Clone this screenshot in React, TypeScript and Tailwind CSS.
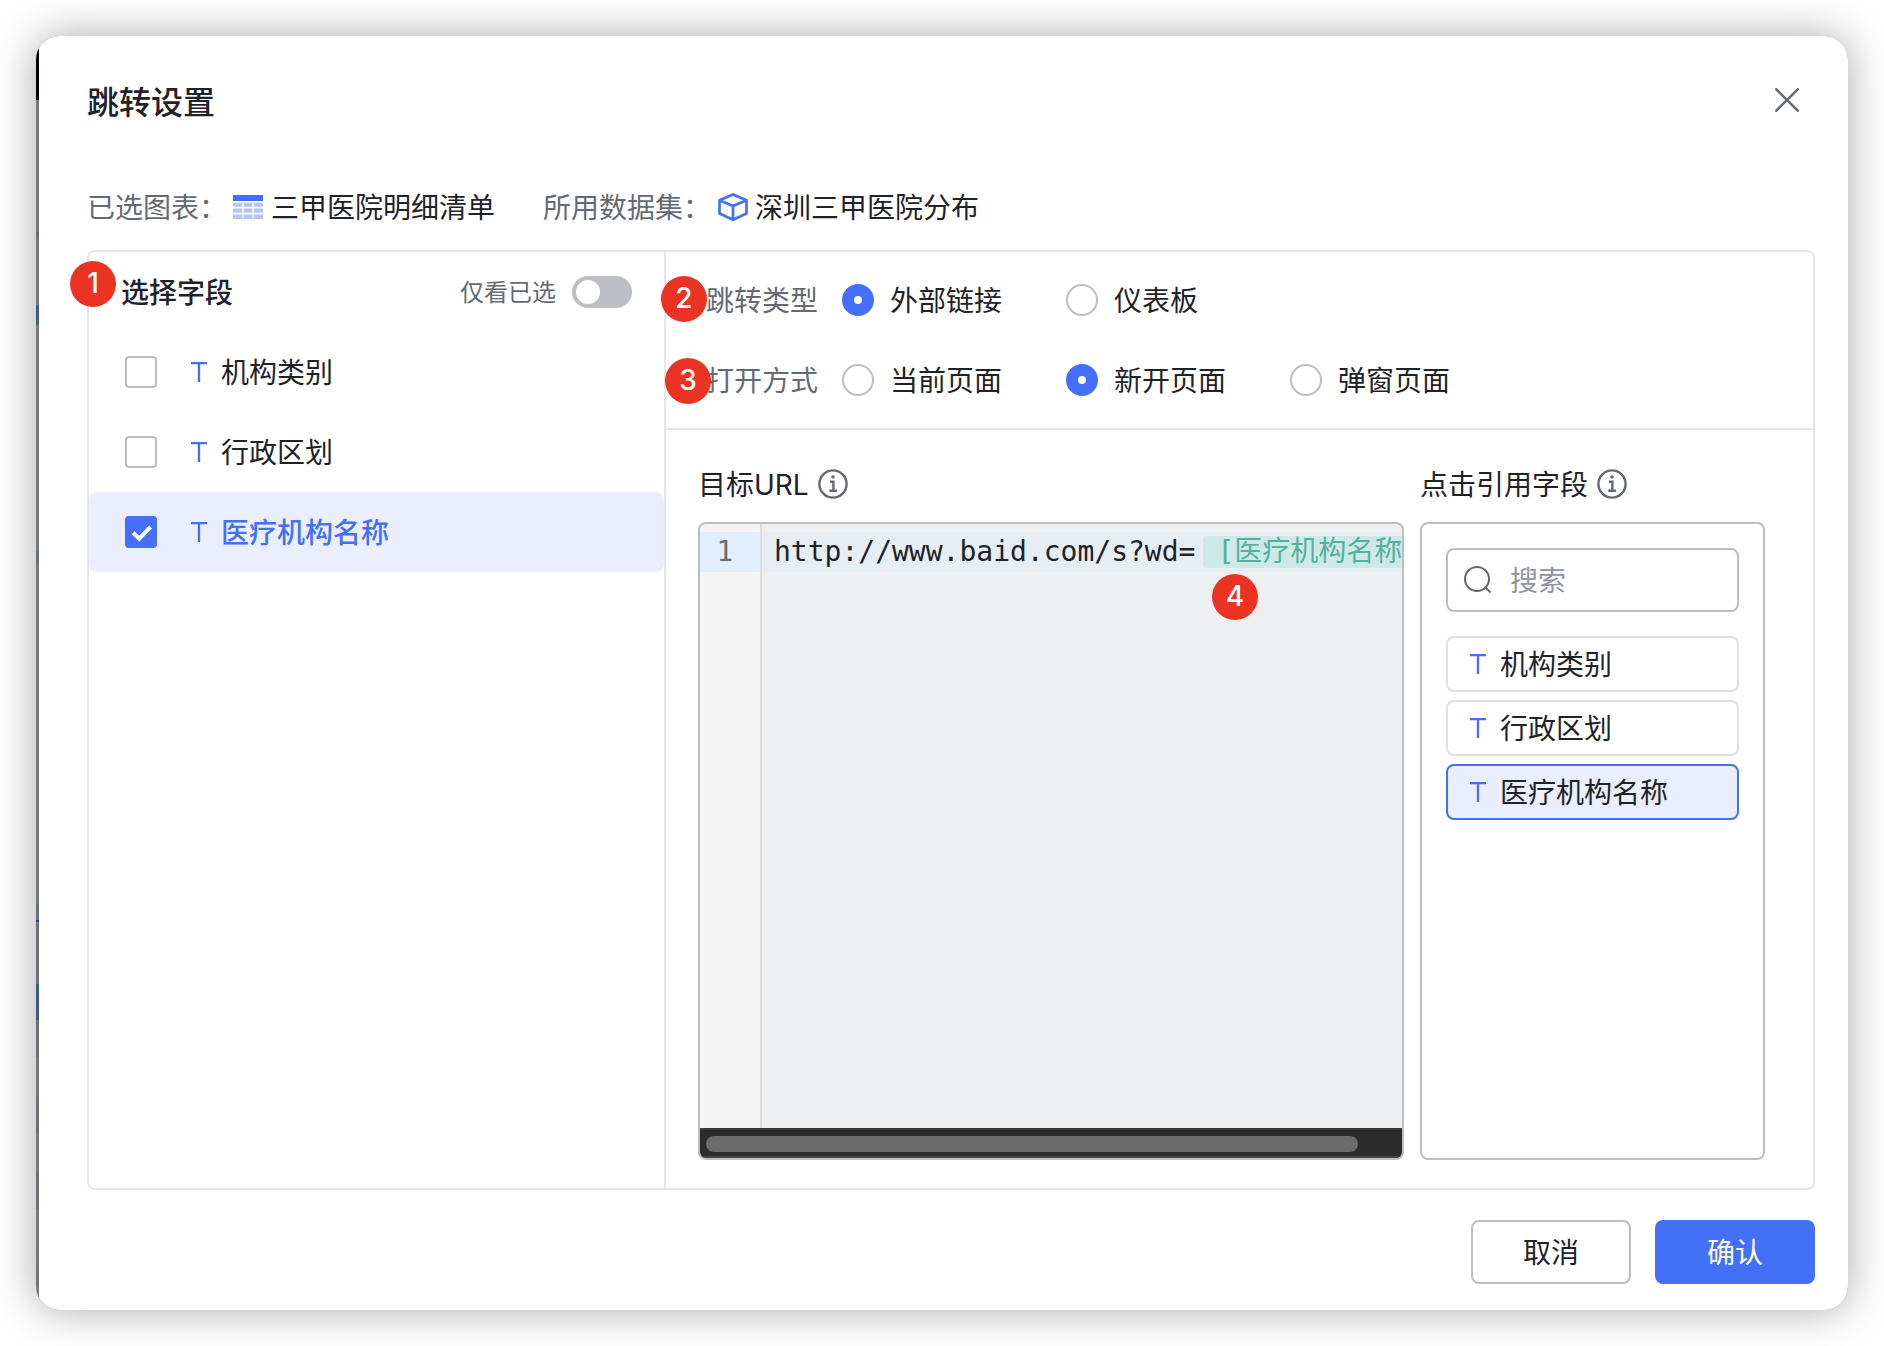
import { useState } from 'react'
import type { ReactNode } from 'react'

const fields = ['机构类别', '行政区划', '医疗机构名称']
const jumpTypes = ['外部链接', '仪表板']
const openModes = ['当前页面', '新开页面', '弹窗页面']

// 弹窗左侧露出的底层页面
const backdrop = [
  { height: 64, className: 'bg-[#000208]' },
  { height: 132, className: 'bg-[#757779]' },
  { height: 6, className: 'bg-[#66707e]' },
  { height: 67, className: 'bg-[#757779]' },
  { height: 20, className: 'bg-[#425a87]' },
  { height: 226, className: 'bg-[#757779]' },
  { height: 12, className: 'bg-[#66707e]' },
  { height: 341, className: 'bg-[#757779]' },
  { height: 16, className: 'bg-[#66707e]' },
  { height: 2, className: 'bg-[#27408f]' },
  { height: 62, className: 'bg-[#6a7076]' },
  { height: 36, className: 'bg-[#3d5683]' },
  { height: 37, className: 'bg-[#6a7076]' },
  { height: 40, className: 'bg-[#777777]' },
  { height: 36, className: 'bg-[#6a7076]' },
  { height: 40, className: 'bg-[#777777]' },
  { height: 36, className: 'bg-[#6a7076]' },
  { height: 40, className: 'bg-[#777777]' },
]

function TextIcon() {
  return (
    <svg className="size-5 shrink-0 text-[#4370f6]" viewBox="0 0 20 20" fill="none" stroke="currentColor" strokeWidth="2.3">
      <path d="M2 1.2h16M10 1.2V20" />
    </svg>
  )
}

function InfoIcon() {
  return (
    <svg className="size-8 shrink-0 text-[#646a73]" viewBox="0 0 32 32" fill="none" stroke="currentColor">
      <circle cx="16" cy="16" r="13.6" strokeWidth="2.4" />
      <circle cx="16" cy="9" r="1.8" fill="currentColor" stroke="none" />
      <path d="M13 13.7h3.4v8.5M12.3 22.8h7.6" strokeWidth="2.4" />
    </svg>
  )
}

function TableIcon() {
  return (
    <svg className="mr-2 h-6 w-[30px] shrink-0" viewBox="0 0 30 24">
      <path fill="#4370f6" d="M0 0h30v6H0z" />
      <path
        fill="#b4c6fb"
        d="M0 7.7h9.3v4H0zM10.6 7.7h8.8v4h-8.8zM20.7 7.7H30v4h-9.3zM0 13.5h9.3v4.2H0zM10.6 13.5h8.8v4.2h-8.8zM20.7 13.5H30v4.2h-9.3zM0 19.5h9.3V24H0zM10.6 19.5h8.8V24h-8.8zM20.7 19.5H30V24h-9.3z"
      />
    </svg>
  )
}

function CubeIcon() {
  return (
    <svg
      className="mr-1.5 h-7 w-8 shrink-0 text-[#4370f6]"
      viewBox="0 0 32 28"
      fill="none"
      stroke="currentColor"
      strokeWidth="2.7"
      strokeLinejoin="round"
    >
      <path d="M16 1.4 29.5 7.2v13.4L16 26.7 2.5 20.6V7.2zM2.5 7.2 16 13l13.5-5.8M16 13v13.5" />
    </svg>
  )
}

function Badge({ className, children }: { className: string; children: ReactNode }) {
  return (
    <span
      className={`absolute z-10 flex size-[46px] items-center justify-center rounded-full bg-[#ea3323] pb-0.5 font-['Inter','Liberation_Sans',sans-serif] text-[28px] font-medium text-white ${className}`}
    >
      {children}
    </span>
  )
}

function RadioRow({
  label,
  name,
  options,
  value,
  onChange,
}: {
  label: string
  name: string
  options: string[]
  value: string
  onChange: (v: string) => void
}) {
  return (
    <div role="radiogroup" aria-label={label} className="flex h-8 items-center">
      <span className="mr-6 text-[#646a73]">{label}</span>
      <div className="flex gap-16">
        {options.map((o) => (
          <label key={o} className="flex items-center gap-4">
            <input
              type="radio"
              name={name}
              checked={value === o}
              onChange={() => onChange(o)}
              className="size-8 appearance-none rounded-full border-2 border-[#bbbfc4] bg-white checked:border-12 checked:border-[#4370f6]"
            />
            {o}
          </label>
        ))}
      </div>
    </div>
  )
}

export default function App() {
  const [checked, setChecked] = useState<string[]>(['医疗机构名称'])
  const [onlyChecked, setOnlyChecked] = useState(false)
  const [jumpType, setJumpType] = useState('外部链接')
  const [openMode, setOpenMode] = useState('新开页面')
  const [keyword, setKeyword] = useState('')

  const toggle = (f: string) => {
    setChecked(checked.includes(f) ? checked.filter((c) => c !== f) : [...checked, f])
  }

  const listed = onlyChecked ? fields.filter((f) => checked.includes(f)) : fields

  return (
    <div className="flex min-h-screen bg-white p-9 font-['Noto_Sans','Noto_Sans_CJK_SC',sans-serif] text-[28px] leading-8 text-[#1f2329]">
      <div className="flex flex-1 overflow-hidden rounded-3xl bg-[#777777] shadow-[0_0_44px_rgba(0,0,0,0.34)]">
        <div className="w-[3px] shrink-0">
          {backdrop.map((b, i) => (
            <div key={i} className={b.className} style={{ height: b.height }} />
          ))}
        </div>

        <div role="dialog" aria-label="跳转设置" className="flex min-w-0 flex-1 flex-col bg-white pt-11 pr-[33px] pb-[26px] pl-12">
          <div className="flex h-11 items-center justify-between pr-4">
            <h1 className="text-[32px] font-medium">跳转设置</h1>
            <button aria-label="关闭" className="pb-1 text-[#646a73]">
              <svg
                className="size-6"
                viewBox="0 0 24 24"
                fill="none"
                stroke="currentColor"
                strokeWidth="2.6"
                strokeLinecap="round"
              >
                <path d="M1.3 1.3l21.4 21.4M22.7 1.3L1.3 22.7" />
              </svg>
            </button>
          </div>

          <div className="mt-[67px] flex items-center">
            <span className="text-[#646a73]">已选图表：</span>
            <span className="ml-1.5 flex items-center">
              <TableIcon />
              三甲医院明细清单
            </span>
            <span className="ml-12 text-[#646a73]">所用数据集：</span>
            <span className="ml-1.5 flex items-center">
              <CubeIcon />
              深圳三甲医院分布
            </span>
          </div>

          <div className="mt-[27px] flex flex-1 rounded-lg border-2 border-[#e6e6e6]">
            {/* 字段列表 */}
            <section className="relative w-[577px] shrink-0 border-r-2 border-[#e6e6e6]">
              <Badge className="top-[9px] -left-[19px]">1</Badge>
              <div className="flex h-20 items-center justify-between px-8">
                <h2 className="font-medium">选择字段</h2>
                <label className="flex items-center gap-4 text-[24px] text-[#646a73]">
                  仅看已选
                  <input
                    type="checkbox"
                    role="switch"
                    checked={onlyChecked}
                    onChange={(e) => setOnlyChecked(e.target.checked)}
                    className="h-8 w-[60px] appearance-none rounded-full bg-[#bbbfc4] p-1 before:block before:size-6 before:rounded-full before:bg-white checked:bg-[#4370f6] checked:before:ml-auto"
                  />
                </label>
              </div>
              {listed.map((f) => {
                const on = checked.includes(f)
                return (
                  <label
                    key={f}
                    className={`flex h-20 items-center rounded-lg pl-9 ${on ? 'bg-[#ebeefe] font-medium text-[#4370f6]' : ''}`}
                  >
                    <span className="mr-8 grid">
                      <input
                        type="checkbox"
                        checked={on}
                        onChange={() => toggle(f)}
                        className="col-start-1 row-start-1 size-8 appearance-none rounded border-2 border-[#bbbfc4] bg-white checked:border-[#4370f6] checked:bg-[#4370f6]"
                      />
                      {on && (
                        <svg
                          className="pointer-events-none col-start-1 row-start-1 size-8 text-white"
                          viewBox="0 0 32 32"
                          fill="none"
                          stroke="currentColor"
                          strokeWidth="4"
                        >
                          <path d="M8.2 16.8l6 5.8L25.6 11" />
                        </svg>
                      )}
                    </span>
                    <TextIcon />
                    <span className="ml-3">{f}</span>
                  </label>
                )
              })}
            </section>

            <section className="flex min-w-0 flex-1 flex-col">
              <div className="relative flex flex-col gap-12 border-b-2 border-[#e6e6e6] px-10 py-8">
                <Badge className="top-6 -left-[5px]">2</Badge>
                <Badge className="top-[106px] -left-px">3</Badge>
                <RadioRow label="跳转类型" name="jumpType" options={jumpTypes} value={jumpType} onChange={setJumpType} />
                <RadioRow label="打开方式" name="openMode" options={openModes} value={openMode} onChange={setOpenMode} />
              </div>

              <div className="flex flex-1 gap-4 pt-[38px] pr-12 pb-7 pl-8">
                <div className="flex min-w-0 flex-1 flex-col">
                  <div className="flex h-8 items-center gap-2">
                    <span>
                      目标<span className="font-['Inter',sans-serif]">URL</span>
                    </span>
                    <InfoIcon />
                  </div>
                  <div className="relative mt-[22px] flex flex-1 flex-col overflow-hidden rounded-lg border-2 border-[#bbbfc4] bg-[#eeeff1] font-['DejaVu_Sans_Mono','Noto_Sans_CJK_SC',monospace]">
                    <Badge className="top-[50px] right-36">4</Badge>
                    <div className="flex flex-1">
                      <div className="w-[62px] shrink-0 border-r-2 border-[#dddddd] bg-[#f5f5f5] pt-2">
                        <div className="flex h-10 items-center justify-center bg-[#e2efff] pr-2.5 text-[#6c6c6c]">1</div>
                      </div>
                      <div className="min-w-0 flex-1 overflow-hidden pt-2">
                        <div className="flex h-10 items-center bg-[#e6edf3] pl-3 whitespace-nowrap">
                          http://www.baid.com/s?wd=
                          <span className="ml-2 shrink-0 rounded bg-[#cde8e7] px-3.5 text-[#52b29c]">[医疗机构名称]</span>
                        </div>
                      </div>
                    </div>
                    <div className="border-y-2 border-t-[#3a3a3a] border-b-[#464648] bg-[#2b2b2b] pt-1.5 pr-11 pb-1 pl-1.5">
                      <div className="h-4 rounded-full bg-[#6b6b6b]" />
                    </div>
                  </div>
                </div>

                <div className="flex w-[345px] shrink-0 flex-col">
                  <div className="flex h-8 items-center gap-2">
                    点击引用字段
                    <InfoIcon />
                  </div>
                  <div className="mt-[22px] flex flex-1 flex-col gap-2 rounded-lg border-2 border-[#bbbfc4] p-6">
                    <label className="mb-4 flex h-16 items-center gap-[18px] rounded-lg border-2 border-[#bbbfc4] px-4">
                      <svg
                        className="size-7 shrink-0 text-[#646a73]"
                        viewBox="0 0 28 28"
                        fill="none"
                        stroke="currentColor"
                        strokeWidth="2"
                      >
                        <circle cx="13" cy="13" r="12" />
                        <path d="M21.5 21.5l5 5" />
                      </svg>
                      <input
                        aria-label="搜索"
                        placeholder="搜索"
                        value={keyword}
                        onChange={(e) => setKeyword(e.target.value)}
                        className="min-w-0 flex-1 outline-none placeholder:text-[#8f959e]"
                      />
                    </label>
                    {fields
                      .filter((f) => f.includes(keyword))
                      .map((f) => (
                        <button
                          key={f}
                          className={`flex h-14 items-center gap-3 rounded-lg border-2 px-5 ${
                            checked.includes(f) ? 'border-[#4370f6] bg-[#ebeefe]' : 'border-[#dee0e3]'
                          }`}
                        >
                          <TextIcon />
                          {f}
                        </button>
                      ))}
                  </div>
                </div>
              </div>
            </section>
          </div>

          <div className="mt-[30px] flex justify-end gap-6">
            <button className="h-16 w-40 rounded-lg border-2 border-[#bbbfc4]">取消</button>
            <button className="h-16 w-40 rounded-lg bg-[#4370f6] text-white">确认</button>
          </div>
        </div>
      </div>
    </div>
  )
}
